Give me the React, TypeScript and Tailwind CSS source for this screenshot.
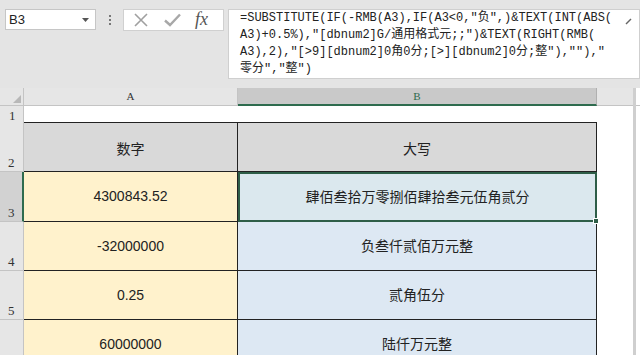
import React from "react";

const mono = { fontFamily: '"Liberation Mono", "Noto Sans CJK SC", monospace' };
const sans = { fontFamily: '"Liberation Sans", "Noto Sans CJK SC", sans-serif' };
const serif = { fontFamily: '"Liberation Serif", "Noto Sans CJK SC", serif' };

const lines = [
  '=SUBSTITUTE(IF(-RMB(A3),IF(A3<0,"负",)&TEXT(INT(ABS(',
  'A3)+0.5%),"[dbnum2]G/通用格式元;;")&TEXT(RIGHT(RMB(',
  'A3),2),"[>9][dbnum2]0角0分;[>][dbnum2]0分;整"),""),"',
  '零分","整")',
];

const rows = [
  { n: "3", a: "4300843.52", b: "肆佰叁拾万零捌佰肆拾叁元伍角贰分", h: "h-[50px]", sel: true },
  { n: "4", a: "-32000000", b: "负叁仟贰佰万元整", h: "h-[49px]" },
  { n: "5", a: "0.25", b: "贰角伍分", h: "h-[49px]" },
  { n: "", a: "60000000", b: "陆仟万元整", h: "h-[49px]" },
];

export default function App() {
  return (
    <div className="w-[640px] h-[355px] overflow-hidden bg-[#e4e4e4] flex flex-col" style={sans}>
      {/* Formula bar */}
      <div className="flex items-start pt-[9px] h-[88px] shrink-0">
        <div className="ml-[5px] w-[91px] h-[21px] bg-white border border-[#c6c6c6] flex items-center justify-between pl-[3px] pr-[6px]">
          <span className="text-[13px] text-[#222] leading-none">B3</span>
          <svg width="7" height="4" viewBox="0 0 7 4"><path d="M0 0 L7 0 L3.5 4 Z" fill="#555" /></svg>
        </div>
        <div className="w-[27px] h-[21px] flex flex-col items-center justify-center gap-[2px]">
          <div className="w-[2px] h-[2px] bg-[#777]" />
          <div className="w-[2px] h-[2px] bg-[#777]" />
          <div className="w-[2px] h-[2px] bg-[#777]" />
        </div>
        <div className="w-[101px] h-[22px] bg-white border border-[#d0d0d0] flex items-center">
          <svg className="ml-[10px]" width="14" height="14" viewBox="0 0 14 14">
            <path d="M1 1 L13 13 M13 1 L1 13" stroke="#a0a0a0" strokeWidth="1.6" />
          </svg>
          <svg className="ml-[16px]" width="17" height="14" viewBox="0 0 17 14">
            <path d="M1 7.5 L6 12 L16 1.5" stroke="#a8a8a8" strokeWidth="2.4" fill="none" />
          </svg>
          <span className="ml-[14px] text-[18px] italic leading-none text-[#555] -mt-[2px]" style={serif}>fx</span>
        </div>
        <div className="ml-[4px] flex-1 h-[70px] bg-white border border-[#cfcfcf] relative">
          <div className="pl-[11px] text-[12px] leading-[17px] text-[#222] whitespace-pre" style={mono}>
            {lines.map((l, i) => (
              <div key={i}>{l}</div>
            ))}
          </div>
          <svg className="absolute right-[7px] top-[8px]" width="7" height="7" viewBox="0 0 7 7">
            <path d="M1 6 L6 1" stroke="#666" strokeWidth="1.5" />
          </svg>
        </div>
      </div>

      {/* Grid */}
      <div className="flex-1 grid grid-cols-[24px_214px_359px_36px_3px_1fr] grid-rows-[18px_17px_49px_auto] content-start">
        {/* header row */}
        <div className="bg-[#e6e6e6] border-r border-b border-[#c4c4c4] relative">
          <svg className="absolute right-[2px] bottom-[2px]" width="8" height="8" viewBox="0 0 8 8"><path d="M8 0 L8 8 L0 8 Z" fill="#b8b8b8" /></svg>
        </div>
        <div className="bg-[#e6e6e6] border-r border-b border-[#c4c4c4] flex items-center justify-center text-[11px] text-[#333]" style={serif}>A</div>
        <div className="bg-[#c9c9c9] border-r border-[#b0b0b0] border-b-2 border-b-[#2e6b4e] flex items-center justify-center text-[11px] text-[#2e6b4e]" style={serif}>B</div>
        <div className="bg-[#e6e6e6] border-b border-[#c4c4c4]" />
        <div className="bg-[#cfcfcf]" />
        <div className="bg-white border-b border-[#c4c4c4]" />

        {/* row 1 */}
        <div className="bg-[#e6e6e6] border-r border-[#c4c4c4] flex items-end pl-[9px] text-[13px] leading-[15px] text-[#333]" style={serif}>1</div>
        <div className="bg-white border-b border-[#222]" />
        <div className="bg-white border-b border-[#222]" />
        <div className="bg-white" />
        <div className="bg-[#cfcfcf]" />
        <div className="bg-white" />

        {/* row 2 */}
        <div className="bg-[#e6e6e6] border-r border-b border-[#c4c4c4] flex items-end pl-[8px] pb-[1px] text-[13px] leading-[15px] text-[#333]" style={serif}>2</div>
        <div className="bg-[#d9d9d9] border-r border-b border-[#222] flex items-center justify-center pt-[4px] text-[14px] text-[#222]">数字</div>
        <div className="bg-[#d9d9d9] border-r border-b border-[#222] flex items-center justify-center pt-[4px] text-[14px] text-[#222]">大写</div>
        <div className="bg-white" />
        <div className="bg-[#cfcfcf]" />
        <div className="bg-white" />

        {rows.map((r, i) => (
          <React.Fragment key={i}>
            <div
              className={`${r.h} ${r.sel ? "bg-[#d2d2d2] border-r-2 border-r-[#2e6b4e]" : "bg-[#e6e6e6] border-r border-[#c4c4c4]"} border-b border-b-[#c4c4c4] flex items-end pl-[8px] pb-[1px] text-[13px] leading-[15px] text-[#333]`}
              style={serif}
            >
              {r.n}
            </div>
            <div className="bg-[#fff2cc] border-r border-b border-[#222] flex items-center justify-center text-[14px] text-[#222]">{r.a}</div>
            <div
              className={`${r.sel ? "bg-[#dbe8ee] border-2 border-[#2e5e48] relative" : "bg-[#dde8f3] border-r border-b border-[#222]"} flex items-center justify-center text-[14px] text-[#222]`}
            >
              {r.b}
              {r.sel && <div className="absolute -right-[4px] -bottom-[4px] w-[6px] h-[6px] bg-[#2e5e48] border border-white" />}
            </div>
            <div className="bg-white" />
            <div className="bg-[#cfcfcf]" />
            <div className="bg-white" />
          </React.Fragment>
        ))}
      </div>
    </div>
  );
}
